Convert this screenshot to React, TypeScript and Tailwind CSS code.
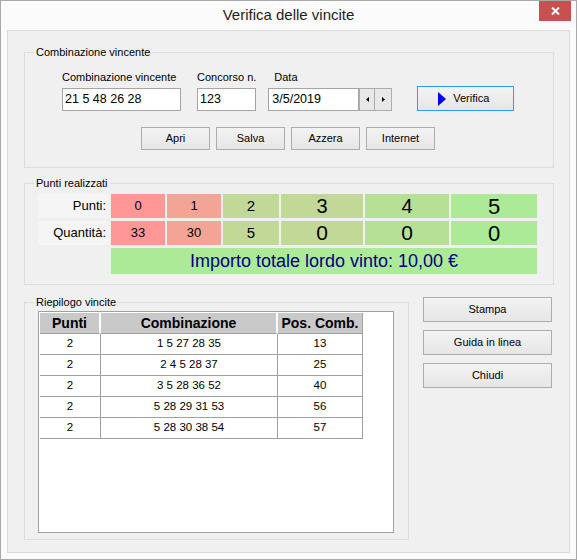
import React from 'react';

const btn =
  'flex items-center justify-center border border-[#adadad] bg-gradient-to-b from-[#f3f3f3] to-[#e6e6e6] text-[11px] text-black';

function Group({ label, className, children }: { label: string; className: string; children: React.ReactNode }) {
  return (
    <div className={`border border-[#dcdcdc] ${className}`}>
      <div className="-mt-[7px] ml-[9px] w-fit bg-[#f0f0f0] px-[2px] text-[11px] leading-[13px]">{label}</div>
      {children}
    </div>
  );
}

const rows = [
  { punti: '2', comb: '1 5 27 28 35', pos: '13' },
  { punti: '2', comb: '2 4 5 28 37', pos: '25' },
  { punti: '2', comb: '3 5 28 36 52', pos: '40' },
  { punti: '2', comb: '5 28 29 31 53', pos: '56' },
  { punti: '2', comb: '5 28 30 38 54', pos: '57' },
];

export default function App() {
  return (
    <div className="flex h-[560px] w-[577px] flex-col border border-[#a9a9a9] bg-[#fbfbfb] font-['Liberation_Sans',Arial,sans-serif] text-black">
      {/* Title bar */}
      <div className="flex h-[29px] shrink-0">
        <div className="flex-1" />
        <div className="flex items-center text-[15px] text-[#1e1e1e]">Verifica delle vincite</div>
        <div className="flex flex-1 justify-end">
          <div className="mr-[5px] flex h-[20px] w-[32px] items-center justify-center bg-[#c75050]">
            <svg width="9" height="8" viewBox="0 0 9 8">
              <path d="M1 0.5 L8 7.5 M8 0.5 L1 7.5" stroke="white" strokeWidth="2" />
            </svg>
          </div>
        </div>
      </div>

      {/* Client area */}
      <div className="mx-[6px] h-[523px] border border-[#dadada] bg-[#f0f0f0] pl-[16px] pr-[15px]">
        {/* Combinazione vincente */}
        <Group label="Combinazione vincente" className="mt-[21px] pb-[17px]">
          <div className="ml-[37px] mt-[12px] flex items-start text-[11px]">
            <div className="flex flex-col">
              <span className="leading-[13px]">Combinazione vincente</span>
              <div className="mt-[4px] flex h-[23px] w-[119px] items-center border border-[#a5a5a5] bg-white pl-[2px] text-[12.5px]">
                21 5 48 26 28
              </div>
            </div>
            <div className="ml-[16px] flex flex-col">
              <span className="leading-[13px]">Concorso n.</span>
              <div className="mt-[4px] flex h-[23px] w-[59px] items-center border border-[#a5a5a5] bg-white pl-[2px] text-[12.5px]">
                123
              </div>
            </div>
            <div className="ml-[12px] flex flex-col">
              <span className="ml-[6px] leading-[13px]">Data</span>
              <div className="mt-[4px] flex">
                <div className="flex h-[23px] w-[91px] items-center border border-[#a5a5a5] bg-white pl-[3px] text-[12.5px]">
                  3/5/2019
                </div>
                <div className="flex h-[23px] w-[16px] items-center justify-center border border-[#adadad] bg-[#e8e8e8]">
                  <svg width="3" height="5" viewBox="0 0 3 5">
                    <polygon points="3,0 0,2.5 3,5" fill="black" />
                  </svg>
                </div>
                <div className="flex h-[23px] w-[17px] items-center justify-center border border-l-0 border-[#adadad] bg-[#e8e8e8]">
                  <svg width="3" height="5" viewBox="0 0 3 5">
                    <polygon points="0,0 3,2.5 0,5" fill="black" />
                  </svg>
                </div>
              </div>
            </div>
            <div className="ml-[25px] mt-[15px] flex h-[25px] w-[97px] items-center justify-center gap-[7px] border border-[#3399ff] bg-gradient-to-b from-[#f3f3f3] to-[#e6e6e6] pr-[4px]">
              <svg width="8" height="14" viewBox="0 0 8 14">
                <polygon points="0,0 8,7 0,14" fill="#0000f0" />
              </svg>
              <span>Verifica</span>
            </div>
          </div>
          <div className="ml-[116px] mt-[16px] flex gap-[6px]">
            {['Apri', 'Salva', 'Azzera', 'Internet'].map((b) => (
              <div key={b} className={`${btn} h-[23px] w-[69px]`}>
                {b}
              </div>
            ))}
          </div>
        </Group>

        {/* Punti realizzati */}
        <Group label="Punti realizzati" className="mt-[15px] pb-[10px]">
          <div className="ml-[13px] mt-[4px] grid grid-cols-[71px_54px_54px_56px_82px_84px_86px] grid-rows-[24px_24px_26px] gap-x-[2px] gap-y-[3px]">
            <div className="flex items-center justify-end bg-[#f5f5f5] pr-[3px] text-[13px]">Punti:</div>
            <div className="flex items-center justify-center bg-[#ff9797] text-[13px]">0</div>
            <div className="flex items-center justify-center bg-[#f2a595] text-[13px]">1</div>
            <div className="flex items-center justify-center bg-[#c2d897] text-[15px]">2</div>
            <div className="flex items-center justify-center bg-[#c2d897] text-[20px]">3</div>
            <div className="flex items-center justify-center bg-[#b7e097] text-[20px]">4</div>
            <div className="flex items-center justify-center bg-[#acea97] text-[22px]">5</div>

            <div className="flex items-center justify-end bg-[#f5f5f5] pr-[3px] text-[13px]">Quantità:</div>
            <div className="flex items-center justify-center bg-[#ff9797] text-[13px]">33</div>
            <div className="flex items-center justify-center bg-[#f2a595] text-[13px]">30</div>
            <div className="flex items-center justify-center bg-[#c2d897] text-[15px]">5</div>
            <div className="flex items-center justify-center bg-[#c2d897] text-[21px]">0</div>
            <div className="flex items-center justify-center bg-[#b7e097] text-[21px]">0</div>
            <div className="flex items-center justify-center bg-[#acea97] text-[22px]">0</div>

            <div />
            <div className="col-span-6 flex items-center justify-center bg-[#acea97] text-[18px] text-[#000080]">
              Importo totale lordo vinto: 10,00 €
            </div>
          </div>
        </Group>

        <div className="mt-[12px] flex items-start">
          {/* Riepilogo vincite */}
          <Group label="Riepilogo vincite" className="mt-[5px] h-[238px] w-[385px]">
            <div className="ml-[13px] mt-[2px] h-[222px] w-[356px] border border-[#a0a0a0] bg-white p-[1px]">
              <div className="flex h-[21px] text-[14px] font-bold">
                <div className="flex w-[61px] items-center justify-center border-b border-r-2 border-b-[#a0a0a0] border-r-white bg-[#c9c9c9]">
                  Punti
                </div>
                <div className="flex w-[177px] items-center justify-center border-b border-r-2 border-b-[#a0a0a0] border-r-white bg-[#c9c9c9]">
                  Combinazione
                </div>
                <div className="flex w-[85px] items-center justify-center border-b border-r border-[#a0a0a0] bg-[#c9c9c9]">
                  Pos. Comb.
                </div>
              </div>
              {rows.map((r, i) => (
                <div key={i} className="flex h-[21px] text-[11.5px]">
                  <div className="flex w-[61px] items-center justify-center border-b border-r border-[#a0a0a0]">{r.punti}</div>
                  <div className="flex w-[177px] items-center justify-center border-b border-r border-[#a0a0a0]">{r.comb}</div>
                  <div className="flex w-[85px] items-center justify-center border-b border-r border-[#a0a0a0]">{r.pos}</div>
                </div>
              ))}
            </div>
          </Group>

          {/* Side buttons */}
          <div className="ml-[14px] flex flex-col gap-[8px]">
            {['Stampa', 'Guida in linea', 'Chiudi'].map((b) => (
              <div key={b} className={`${btn} h-[25px] w-[129px]`}>
                {b}
              </div>
            ))}
          </div>
        </div>
      </div>
    </div>
  );
}
